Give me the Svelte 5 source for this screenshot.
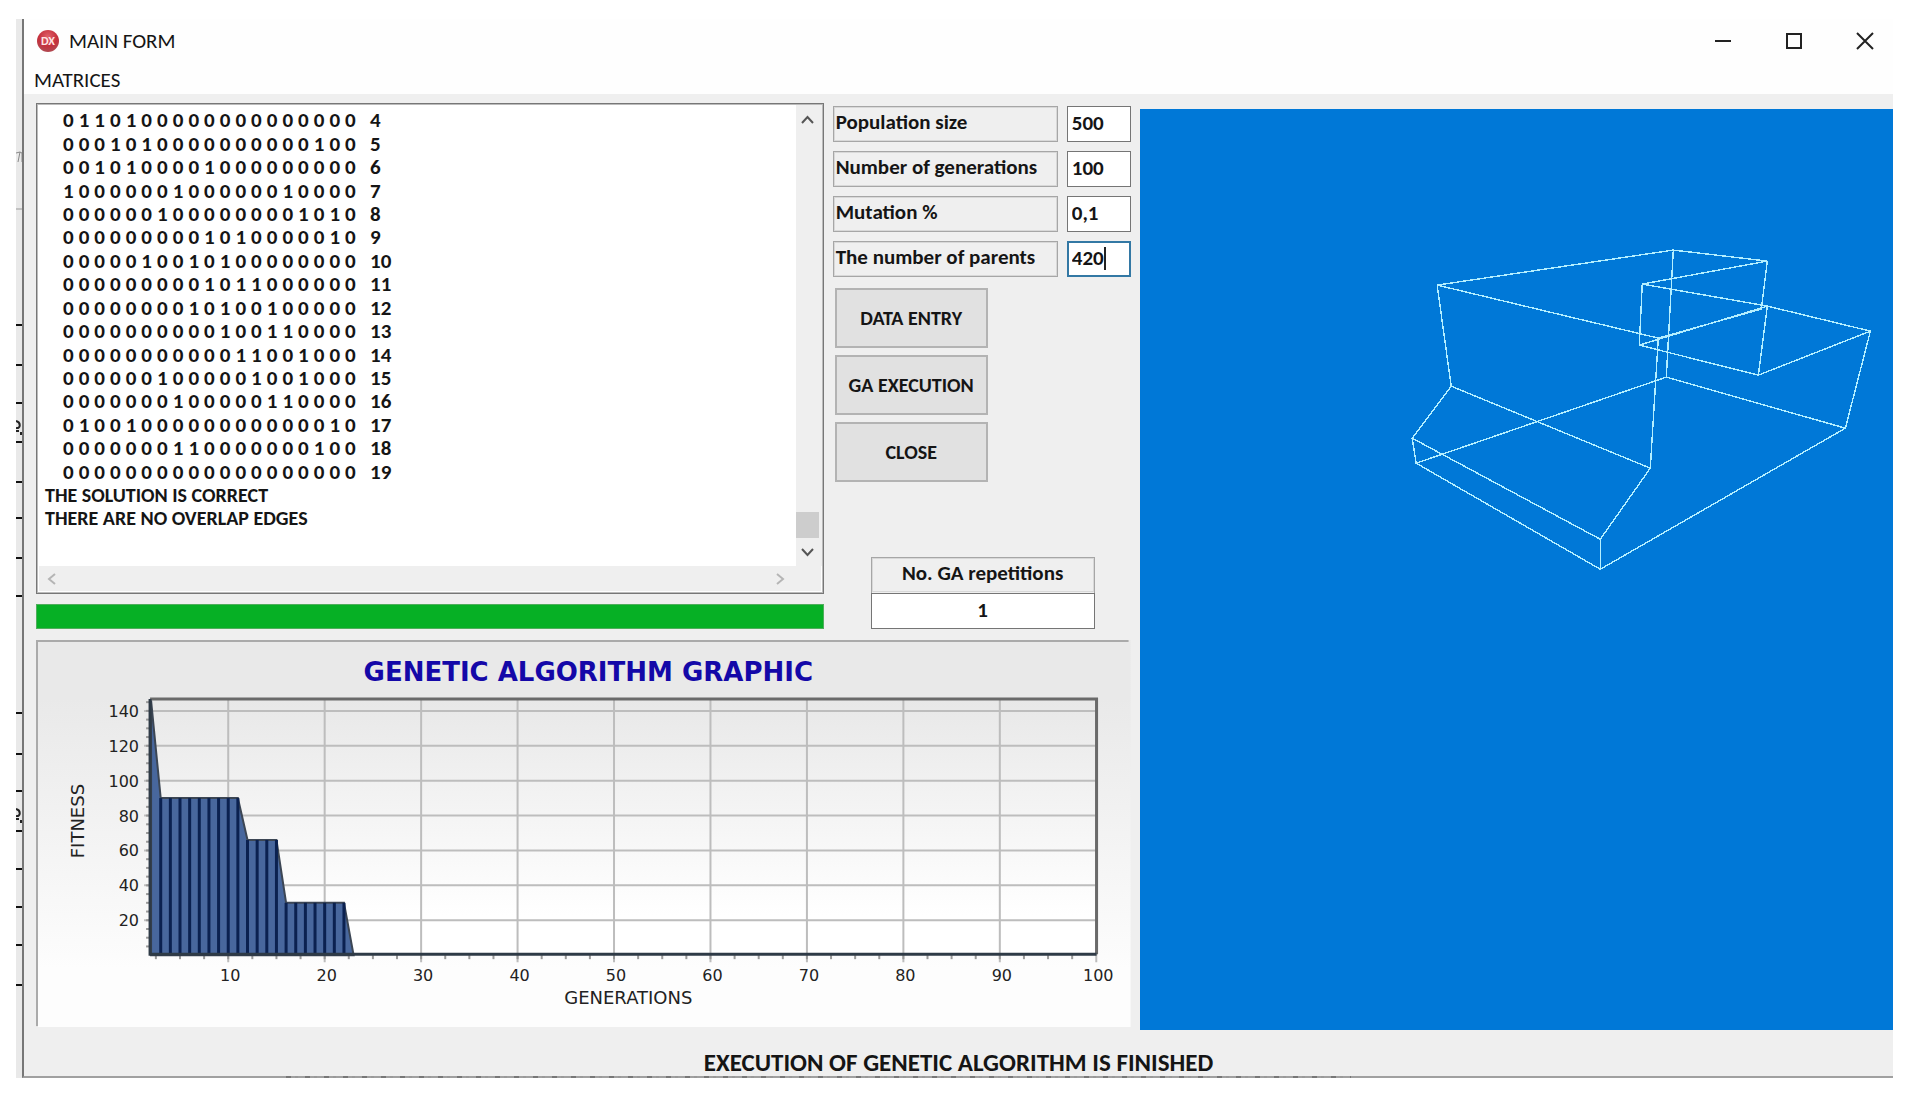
<script>
	const matrix = [
		['0110100000000000000', 4],
		['0001010000000000100', 5],
		['0010100001000000000', 6],
		['1000000100000010000', 7],
		['0000001000000001010', 8],
		['0000000001010000010', 9],
		['0000010010100000000', 10],
		['0000000001011000000', 11],
		['0000000010100100000', 12],
		['0000000000100110000', 13],
		['0000000000011001000', 14],
		['0000001000001001000', 15],
		['0000000100000110000', 16],
		['0100100000000000010', 17],
		['0000000110000000100', 18],
		['0000000000000000000', 19]
	];

	let params = $state([
		{ id: 'population', label: 'Population size', value: '500' },
		{ id: 'generations', label: 'Number of generations', value: '100' },
		{ id: 'mutation', label: 'Mutation %', value: '0,1' },
		{ id: 'parents', label: 'The number of parents', value: '420', active: true }
	]);
	let repetitions = $state('1');

	// best fitness per generation
	const fitness = [
		[2, 146],
		[3, 90],
		[11, 90],
		[12, 66],
		[15, 66],
		[16, 30],
		[22, 30],
		[23, 0]
	];

	const x = (v) => 115 + (v - 2) * 9.64;
	const y = (v) => 315 - v * 1.744;

	function fitnessAt(g) {
		const i = fitness.findIndex(([gen]) => gen >= g);
		if (fitness[i][0] === g) return fitness[i][1];
		return fitness[i - 1][1];
	}

	const area = `M${x(2)} ${y(0)}` + fitness.map(([g, f]) => `L${x(g)} ${y(f)}`).join('') + 'Z';
	const bars = Array.from({ length: 20 }, (_, i) => i + 3);
	const xTicks = Array.from({ length: 10 }, (_, i) => (i + 1) * 10);
	const yTicks = [20, 40, 60, 80, 100, 120, 140];
	const xMinor = Array.from({ length: 39 }, (_, i) => 2.5 * (i + 1));
	const yMinor = Array.from({ length: 29 }, (_, i) => 5 * (i + 1));

	// projected solid
	const solid = [
		'M297 176L533 141L627 152L502 175L627 197L730 222',
		'M502 175L499 236L618 266L730 222',
		'M627 152L621 200L518 229L297 176',
		'M499 236L627 197L618 266',
		'M533 141L526 268L705 319L730 222',
		'M518 229L510 359L460 430V460L705 319',
		'M297 176L311 277L272 329L276 354L460 460',
		'M311 277L510 359',
		'M272 329L460 430',
		'M276 354L526 268'
	];

	const tableLines = [306, 346, 384, 423, 463, 499, 539, 577, 694, 735, 772, 812, 850, 888, 926, 966];
</script>

<div class="desktop">
	<svg class="behind" width="6" height="1059" aria-hidden="true">
		<path d="M0 190H6" stroke="#999" />
		{#each tableLines as line}
			<path d="M0 {line}H6" stroke="#111" stroke-width="2" />
		{/each}
		<path d="M0 134L4 133L2 143M4 133L6 134V143" fill="none" stroke="#888" />
		<path d="M0 402C5 403 5 410 0 409M0 412H3M5 413V416" fill="none" stroke="#222" stroke-width="2" />
		<path d="M0 790C5 791 5 798 0 797M0 800H3M5 801V804" fill="none" stroke="#222" stroke-width="2" />
	</svg>

	<main class="window">
		<header class="titlebar">
			<svg class="logo" width="24" height="24" viewBox="0 0 24 24" aria-hidden="true">
				<defs>
					<radialGradient id="ball" cx="0.5" cy="0.3" r="0.7">
						<stop offset="0" stop-color="#e0616a" />
						<stop offset="0.6" stop-color="#c5303c" />
						<stop offset="1" stop-color="#b04a52" />
					</radialGradient>
				</defs>
				<circle cx="12" cy="12" r="11" fill="url(#ball)" />
				<text x="12" y="16" text-anchor="middle">DX</text>
			</svg>
			<h1>MAIN FORM</h1>
			<div class="controls">
				<button aria-label="Minimize">
					<svg width="18" height="18" viewBox="0 0 18 18"><path d="M1 9H17" stroke-width="2" /></svg>
				</button>
				<button aria-label="Maximize">
					<svg width="18" height="18" viewBox="0 0 18 18"><path d="M2 2H16V16H2Z" stroke-width="2" /></svg>
				</button>
				<button aria-label="Close window">
					<svg width="18" height="18" viewBox="0 0 18 18"><path d="M1 1L17 17M17 1L1 17" stroke-width="2" /></svg>
				</button>
			</div>
		</header>

		<nav class="menu"><button>MATRICES</button></nav>

		<div class="workspace">
			<div class="panels">
				<div class="upper">
					<section class="output">
						<div class="log">
							<div class="log-text">
								<table>
									<tbody>
										{#each matrix as [row, index]}
											<tr>
												{#each row as cell}
													<td>{cell}</td>
												{/each}
												<th scope="row">{index}</th>
											</tr>
										{/each}
									</tbody>
								</table>
								<p>THE SOLUTION IS CORRECT</p>
								<p>THERE ARE NO OVERLAP EDGES</p>
							</div>
							<div class="vbar">
								<svg width="13" height="9" viewBox="0 0 13 9"><path d="M1 8L6.5 2L12 8" /></svg>
								<span class="track"></span>
								<span class="thumb"></span>
								<svg width="13" height="9" viewBox="0 0 13 9"><path d="M1 1L6.5 7L12 1" /></svg>
							</div>
							<div class="hbar">
								<svg width="9" height="12" viewBox="0 0 9 12"><path d="M8 1L2 6L8 11" /></svg>
								<svg width="9" height="12" viewBox="0 0 9 12"><path d="M1 1L7 6L1 11" /></svg>
							</div>
						</div>
						<div class="progress" role="progressbar" aria-label="Execution" aria-valuenow="100"></div>
					</section>

					<section class="side">
						<div class="params">
							{#each params as param}
								<label for={param.id}>{param.label}</label>
								<div class="field">
									<input id={param.id} class:active={param.active} bind:value={param.value} />
									{#if param.active}<span class="caret"></span>{/if}
								</div>
							{/each}
						</div>
						<div class="actions">
							<button>DATA ENTRY</button>
							<button>GA EXECUTION</button>
							<button>CLOSE</button>
						</div>
						<div class="repeat">
							<label for="repetitions">No. GA repetitions</label>
							<input id="repetitions" bind:value={repetitions} />
						</div>
					</section>
				</div>

				<svg class="chart" viewBox="0 0 1094 387" role="img" aria-label="Genetic algorithm graphic">
					<defs>
						<linearGradient id="paper" x1="0" y1="0" x2="0" y2="1">
							<stop offset="0.15" stop-color="#e9e9e9" />
							<stop offset="0.85" stop-color="#fdfdfd" />
						</linearGradient>
						<linearGradient id="plot" x1="0" y1="0" x2="0" y2="1">
							<stop offset="0" stop-color="#e8e8e8" />
							<stop offset="0.85" stop-color="#fff" />
						</linearGradient>
					</defs>
					<rect width="1094" height="387" fill="url(#paper)" />
					<path d="M1 386V1H1092" class="edge" />
					<text class="heading" x="552" y="41">GENETIC ALGORITHM GRAPHIC</text>

					<rect x="114" y="59" width="946" height="255" fill="url(#plot)" />
					{#each yTicks as tick}
						<path class="gridline" d="M108 {y(tick)}H1060" />
						<text class="ylabel" x="103" y={y(tick) + 6}>{tick}</text>
					{/each}
					{#each xTicks as tick}
						<path class="gridline" d="M{x(tick)} 59V322" />
						<text class="xlabel" x={x(tick) + 2} y="341">{tick}</text>
					{/each}
					{#each xMinor as tick}
						<path class="tick" d="M{x(tick)} 315V319" />
					{/each}
					{#each yMinor as tick}
						<path class="tick" d="M110 {y(tick)}H114" />
					{/each}

					<path d={area} fill="#48679d" stroke="#3c4654" stroke-width="2" />
					{#each bars as g}
						<path class="bar" d="M{x(g)} {y(0)}V{y(fitnessAt(g))}" />
					{/each}
					<path d="M114 59H1060V314" fill="none" stroke="#6a6a6a" stroke-width="3" />
					<path d="M114 59V314H1060" fill="none" stroke="#2e3a46" stroke-width="3" />

					<text class="caption" x="592" y="364">GENERATIONS</text>
					<text class="caption" transform="translate(48 181) rotate(-90)">FITNESS</text>
				</svg>
			</div>

			<svg class="scene" viewBox="0 0 753 920" preserveAspectRatio="xMidYMin meet" role="img" aria-label="Solid model">
				{#each solid as d}
					<path {d} />
				{/each}
			</svg>
		</div>

		<footer>
			<p>EXECUTION OF GENETIC ALGORITHM IS FINISHED</p>
			<div class="fringe"></div>
		</footer>
	</main>
</div>

<style>
	:global(body) {
		margin: 0;
		background: #fff;
	}

	.desktop {
		display: flex;
		padding: 19px 15px 17px 16px;
		font-family: Carlito, Lato, 'Open Sans', sans-serif;
		font-size: 21px;
		color: #151515;
	}

	.behind {
		flex: none;
		background: #e9e9e9;
	}

	.window {
		flex: 1;
		min-width: 0;
		box-sizing: border-box;
		border-left: 2px solid #777;
		border-bottom: 2px solid #a0a0a0;
		background: #efefef;
	}

	button,
	input {
		font: inherit;
		color: inherit;
		border-radius: 0;
	}

	.titlebar {
		display: flex;
		align-items: center;
		height: 44px;
		padding-left: 12px;
		background: #fefefe;
	}

	.logo text {
		font-size: 12px;
		font-weight: 700;
		fill: #ffe4e4;
	}

	h1 {
		margin: 0 auto 0 9px;
		font-size: 21px;
		font-weight: 400;
	}

	.controls {
		display: flex;
		gap: 15px;
	}

	.controls button {
		display: grid;
		place-items: center;
		width: 56px;
		height: 44px;
		padding: 0;
		border: 0;
		background: none;
	}

	.controls path {
		fill: none;
		stroke: #222;
	}

	.menu {
		height: 31px;
		padding-left: 10px;
		background: #fefefe;
	}

	.menu button {
		height: 31px;
		padding: 2px 0 0;
		border: 0;
		background: none;
	}

	.workspace {
		display: grid;
		grid-template-columns: minmax(0, 1094fr) minmax(0, 753fr);
		column-gap: 9px;
		padding-left: 12px;
	}

	.panels {
		padding-top: 9px;
	}

	.upper {
		display: grid;
		grid-template-columns: minmax(0, 788fr) minmax(0, 298fr);
		column-gap: 9px;
		margin-bottom: 11px;
		font-weight: 700;
	}

	.log {
		display: grid;
		grid-template-columns: 1fr 27px;
		grid-template-rows: 462px 27px;
		border: 1px solid #777;
		outline: 1px solid #bbb;
		outline-offset: -2px;
		background: #fff;
	}

	.log-text {
		padding: 5px 8px;
	}

	.log-text p {
		margin: 0;
		font-size: 20px;
		line-height: 23px;
	}

	table {
		width: 344px;
		height: 375px;
		margin-left: 18px;
		border-collapse: collapse;
		table-layout: fixed;
	}

	td,
	th {
		padding: 0;
		line-height: 23px;
		text-align: left;
	}

	th {
		box-sizing: border-box;
		width: 46px;
		padding-left: 9px;
	}

	.vbar {
		display: flex;
		flex-direction: column;
		align-items: center;
		padding: 11px 4px 9px 0;
		background: #efefef;
	}

	.vbar path,
	.hbar path {
		fill: none;
		stroke: #555;
		stroke-width: 2;
	}

	.track {
		flex: 1;
	}

	.thumb {
		width: 23px;
		height: 26px;
		margin-bottom: 10px;
		background: #cdcdcd;
	}

	.hbar {
		grid-column: 1 / 3;
		display: flex;
		align-items: center;
		justify-content: space-between;
		padding: 0 36px 0 8px;
		margin: 0 2px 2px;
		background: #efefef;
	}

	.hbar path {
		stroke: #b5b5b5;
	}

	.progress {
		height: 25px;
		margin-top: 10px;
		box-sizing: border-box;
		border: 1px solid #4fae5c;
		background: #06b025;
	}

	.side {
		display: flex;
		flex-direction: column;
		padding-top: 3px;
	}

	.params {
		display: grid;
		grid-template-columns: 226fr 64fr;
		gap: 9px;
	}

	.params label,
	.repeat label {
		box-sizing: border-box;
		height: 36px;
		padding-left: 2px;
		border: 1px solid #a6a6a6;
		outline: 1px solid #d8d8d8;
		outline-offset: -2px;
		line-height: 30px;
	}

	.field {
		position: relative;
	}

	input {
		box-sizing: border-box;
		width: 100%;
		height: 36px;
		padding: 0 4px 2px;
		border: 1px solid #757575;
		background: #fff;
		font-weight: 700;
		outline: 0;
	}

	input.active {
		border: 2px solid #3378a4;
		padding: 0 3px 2px;
	}

	.caret {
		position: absolute;
		left: 37px;
		top: 6px;
		width: 2px;
		height: 23px;
		background: #222;
	}

	.actions {
		display: flex;
		flex-direction: column;
		gap: 7px;
		width: 153px;
		margin: 11px 0 0 2px;
	}

	.actions button {
		height: 60px;
		padding: 0;
		border: 2px solid #b3b3b3;
		background: #e1e1e1;
		font-size: 20px;
		font-weight: 700;
	}

	.repeat {
		display: flex;
		flex-direction: column;
		margin: auto 36px 0 38px;
	}

	.repeat label {
		padding: 0;
		border-bottom: 0;
		text-align: center;
	}

	.repeat input {
		text-align: center;
	}

	.chart {
		display: block;
		width: 100%;
		font-family: Verdana, 'DejaVu Sans', sans-serif;
		font-size: 16px;
	}

	.chart text {
		fill: #222;
	}

	.chart .heading {
		font-size: 26px;
		font-weight: 700;
		fill: #1408a8;
		text-anchor: middle;
	}

	.edge {
		fill: none;
		stroke: #aaa;
		stroke-width: 2;
	}

	.gridline {
		stroke: #bdbdbd;
		stroke-width: 2;
	}

	.tick {
		stroke: #999;
		stroke-width: 2;
	}

	.bar {
		stroke: #0b2150;
		stroke-width: 3;
	}

	.xlabel {
		text-anchor: middle;
	}

	.ylabel {
		text-anchor: end;
	}

	.caption {
		font-size: 18px;
		text-anchor: middle;
	}

	.scene {
		display: block;
		width: 100%;
		margin-top: 15px;
		background: #0078d7;
	}

	.scene path {
		fill: none;
		stroke: #b4efff;
		stroke-width: 1.4;
		shape-rendering: crispEdges;
	}

	footer p {
		margin: 0;
		padding: 19px 0 0;
		line-height: 27px;
		text-align: center;
		font-size: 25px;
		font-weight: 700;
	}

	.fringe {
		width: 57%;
		height: 2px;
		margin: 0 0 -2px 14%;
		background: repeating-linear-gradient(90deg, #777 0 5px, transparent 5px 9px, #999 9px 12px, transparent 12px 19px);
	}
</style>
